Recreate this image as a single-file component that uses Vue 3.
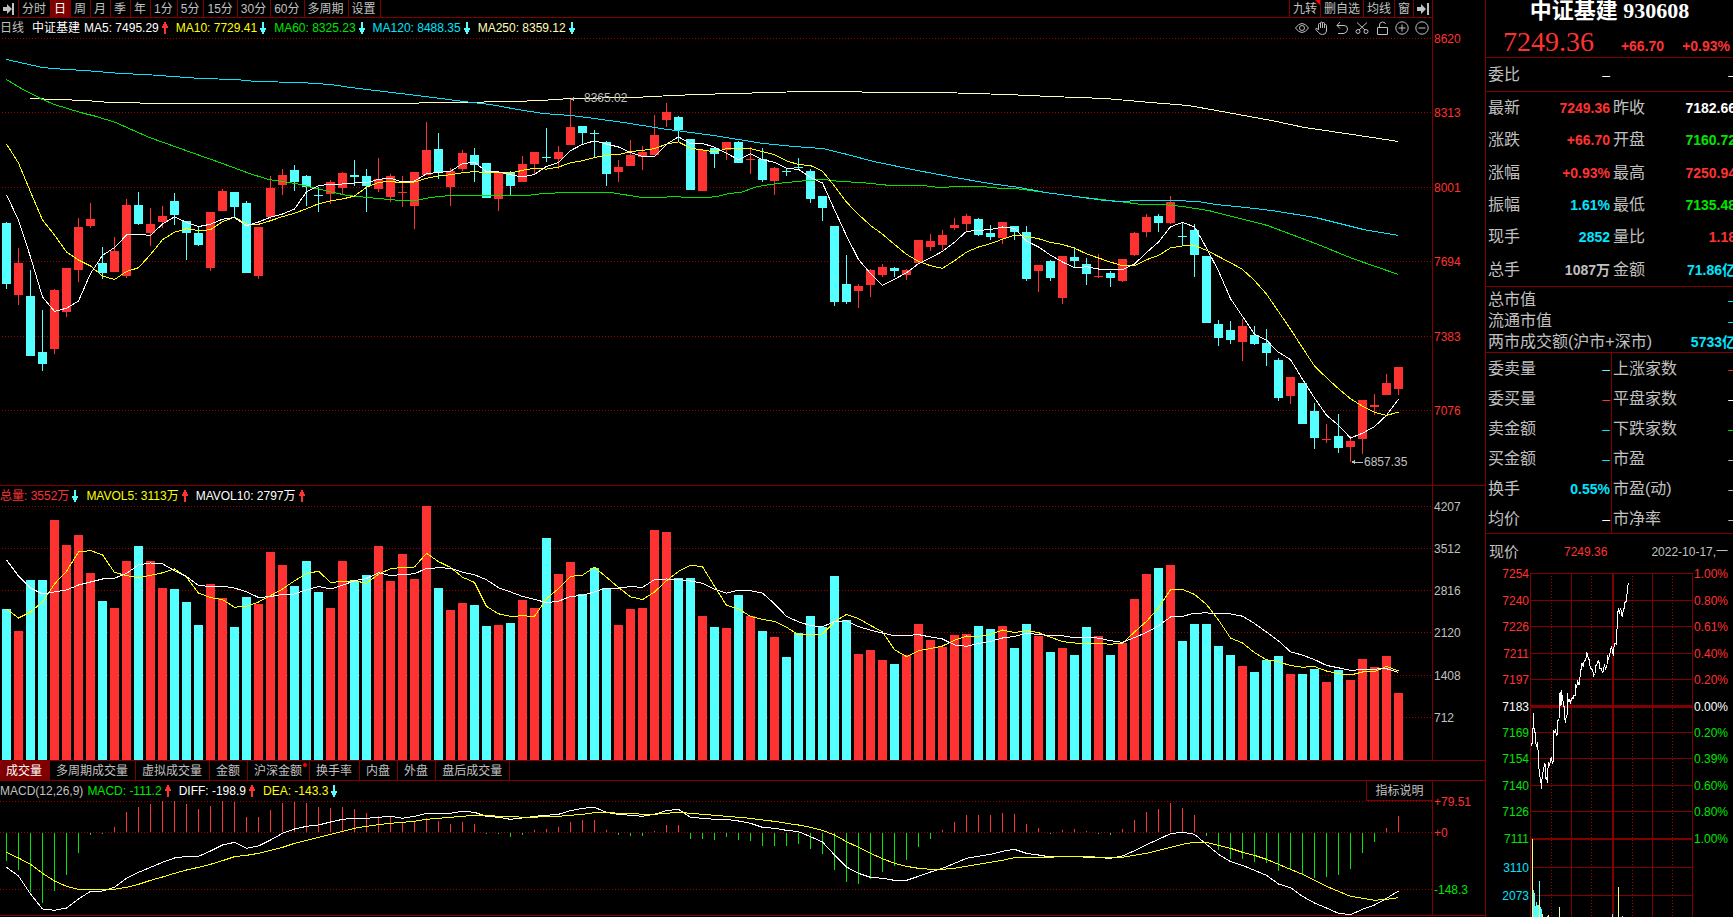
<script setup>
const periods = ['分时', '日', '周', '月', '季', '年', '1分', '5分', '15分', '30分', '60分', '多周期', '设置']
const tools = ['九转', '删自选', '均线', '窗']
const tabs = ['成交量', '多周期成交量', '虚拟成交量', '金额', '沪深金额', '换手率', '内盘', '外盘', '盘后成交量']

const priceLegend = [
  { text: 'MA5: 7495.29', cls: 'white', dir: 'up' },
  { text: 'MA10: 7729.41', cls: 'yellow', dir: 'down' },
  { text: 'MA60: 8325.23', cls: 'green', dir: 'down' },
  { text: 'MA120: 8488.35', cls: 'sky', dir: 'down' },
  { text: 'MA250: 8359.12', cls: 'cream', dir: 'down' }
]
const volumeLegend = [
  { text: '总量: 3552万', cls: 'red', dir: 'down' },
  { text: 'MAVOL5: 3113万', cls: 'yellow', dir: 'up' },
  { text: 'MAVOL10: 2797万', cls: 'white', dir: 'up' }
]
const macdLegend = [
  { text: 'MACD: -111.2', cls: 'green', dir: 'up' },
  { text: 'DIFF: -198.9', cls: 'white', dir: 'up' },
  { text: 'DEA: -143.3', cls: 'yellow', dir: 'down' }
]

// Each candle: direction (1 up, 0 down), high, body top, body bottom, low
const candles = [
  [0, 222, 223, 284, 289], [1, 248, 263, 295, 305], [0, 270, 296, 356, 356], [0, 310, 352, 364, 371], [1, 289, 290, 349, 354],
  [1, 268, 268, 312, 317], [1, 218, 227, 270, 282], [1, 203, 219, 226, 228], [0, 247, 263, 273, 279], [1, 237, 251, 272, 272],
  [1, 199, 205, 276, 278], [0, 192, 205, 224, 225], [1, 208, 224, 233, 246], [1, 206, 216, 222, 228], [0, 193, 201, 215, 225],
  [0, 221, 221, 233, 260], [0, 227, 233, 245, 246], [1, 212, 212, 268, 271], [1, 189, 191, 211, 211], [0, 192, 192, 207, 217],
  [0, 201, 203, 273, 273], [1, 227, 227, 276, 279], [1, 176, 188, 217, 219], [1, 169, 175, 185, 195], [0, 165, 170, 182, 191],
  [0, 175, 176, 187, 206], [0, 187, 195, 196, 212], [1, 180, 182, 194, 204], [1, 172, 173, 188, 194], [0, 160, 175, 177, 186],
  [0, 169, 176, 186, 212], [1, 158, 179, 189, 192], [1, 174, 176, 197, 202], [1, 176, 192, 193, 207], [1, 172, 172, 206, 229],
  [1, 122, 150, 175, 175], [0, 133, 149, 172, 179], [1, 168, 171, 187, 206], [1, 150, 153, 169, 171], [0, 148, 155, 165, 182],
  [0, 163, 163, 198, 198], [1, 172, 172, 199, 211], [0, 171, 172, 186, 195], [1, 156, 164, 182, 182], [1, 152, 152, 164, 174],
  [0, 128, 157, 158, 162], [1, 146, 152, 159, 169], [1, 99, 127, 145, 145], [0, 126, 126, 133, 144], [0, 130, 133, 134, 157],
  [0, 141, 142, 174, 186], [1, 160, 167, 172, 182], [1, 140, 155, 166, 166], [1, 146, 152, 157, 170], [1, 115, 135, 155, 155],
  [1, 103, 112, 120, 127], [0, 116, 117, 130, 141], [0, 139, 139, 190, 190], [1, 149, 150, 191, 191], [0, 147, 148, 154, 168],
  [1, 142, 142, 150, 160], [0, 141, 142, 163, 163], [1, 147, 159, 160, 174], [0, 148, 159, 180, 182], [1, 167, 168, 181, 195],
  [0, 168, 171, 172, 176], [0, 158, 167, 168, 170], [0, 169, 171, 199, 203], [0, 196, 196, 208, 221], [0, 226, 226, 302, 306],
  [0, 255, 284, 302, 304], [1, 284, 286, 291, 308], [1, 269, 270, 285, 297], [1, 264, 267, 275, 277], [0, 267, 268, 271, 277],
  [1, 269, 270, 275, 280], [1, 240, 240, 263, 263], [1, 234, 241, 247, 251], [1, 230, 235, 245, 250], [1, 218, 225, 228, 230],
  [1, 214, 216, 224, 232], [0, 218, 219, 235, 236], [0, 225, 233, 237, 240], [1, 222, 222, 238, 244], [0, 226, 226, 232, 240],
  [0, 226, 232, 279, 281], [1, 265, 265, 271, 292], [0, 260, 261, 278, 281], [1, 256, 256, 298, 304], [0, 247, 257, 261, 267],
  [0, 258, 264, 274, 285], [1, 254, 276, 277, 278], [0, 271, 273, 278, 287], [1, 259, 259, 281, 282], [1, 232, 233, 255, 256],
  [1, 214, 217, 232, 237], [0, 214, 216, 223, 232], [1, 196, 202, 223, 224], [0, 223, 236, 237, 246], [0, 224, 230, 255, 277],
  [0, 256, 256, 323, 323], [0, 320, 324, 338, 346], [0, 321, 330, 340, 344], [1, 319, 326, 342, 361], [0, 326, 335, 344, 345],
  [0, 329, 343, 353, 366], [0, 358, 360, 398, 401], [1, 377, 377, 396, 404], [0, 383, 383, 424, 424], [0, 403, 411, 438, 449],
  [1, 424, 439, 440, 443], [0, 414, 436, 448, 453], [1, 436, 441, 447, 462], [1, 400, 400, 439, 454], [1, 394, 405, 407, 415],
  [1, 374, 383, 395, 395], [1, 367, 367, 389, 395]
]

// Volume bar tops, in thirds of a unit below the pane's origin
const volumes = [
  387, 453, 300, 300, 120, 195, 165, 279, 363, 384, 243, 198, 243, 324, 327, 366, 435, 312, 354, 441,
  351, 372, 216, 255, 318, 243, 336, 384, 243, 303, 285, 198, 303, 222, 297, 78, 324, 390, 369, 375,
  438, 435, 429, 360, 384, 174, 282, 246, 342, 264, 324, 435, 387, 384, 150, 156, 294, 294, 408, 441,
  444, 345, 408, 453, 471, 531, 459, 408, 441, 288, 420, 522, 510, 540, 552, 525, 432, 480, 501, 465,
  462, 438, 447, 438, 504, 432, 468, 516, 504, 525, 441, 468, 525, 489, 357, 282, 264, 255, 483, 432,
  432, 498, 525, 558, 576, 540, 528, 582, 582, 567, 606, 570, 600, 537, 561, 528, 639
].map((v) => 480 + v / 3)

const macdBars = [
  318, 345, 411, 444, 408, 360, 294, 240, 237, 216, 171, 156, 147, 138, 138, 147, 162, 153, 138, 141,
  186, 186, 165, 144, 141, 144, 156, 159, 156, 162, 174, 183, 186, 204, 201, 189, 198, 207, 201, 207,
  237, 237, 246, 240, 225, 222, 216, 201, 195, 195, 225, 240, 243, 243, 228, 210, 210, 252, 252, 255,
  246, 255, 258, 273, 273, 273, 267, 282, 297, 345, 381, 387, 372, 351, 333, 315, 276, 252, 225, 201,
  180, 180, 180, 174, 177, 207, 219, 237, 225, 222, 228, 237, 240, 222, 195, 171, 162, 144, 159, 180,
  243, 285, 312, 312, 321, 324, 348, 345, 357, 369, 366, 360, 342, 294, 261, 219, 183
].map((v) => 755 + v / 3)

const diff = [
  337, 363, 417, 462, 466, 459, 432, 409, 408, 397, 370, 352, 337, 322, 309, 304, 304, 288, 270, 262,
  280, 273, 255, 235, 222, 214, 210, 201, 193, 190, 190, 187, 184, 190, 184, 175, 175, 175, 169, 172,
  184, 187, 193, 189, 184, 181, 178, 167, 160, 157, 172, 178, 181, 184, 178, 167, 163, 187, 190, 193,
  193, 198, 205, 217, 220, 226, 230, 245, 261, 300, 336, 355, 367, 370, 376, 376, 364, 351, 340, 325,
  310, 304, 298, 289, 283, 295, 300, 306, 304, 304, 307, 308, 310, 303, 287, 269, 253, 236, 232, 238,
  268, 298, 320, 331, 346, 361, 387, 398, 424, 444, 459, 475, 479, 463, 450, 430, 408
].map((v) => 755 + v / 3)

const dea = [
  292, 309, 328, 355, 378, 394, 403, 403, 403, 403, 397, 388, 376, 366, 355, 345, 337, 328, 317, 305,
  301, 295, 286, 277, 265, 256, 247, 238, 229, 220, 214, 209, 205, 202, 199, 193, 190, 187, 184, 181,
  181, 184, 184, 187, 187, 184, 184, 181, 178, 173, 172, 175, 175, 178, 178, 175, 172, 175, 178, 181,
  184, 187, 190, 195, 199, 205, 210, 217, 226, 240, 260, 277, 295, 311, 325, 334, 340, 343, 343, 340,
  334, 328, 322, 316, 308, 307, 307, 307, 304, 304, 304, 307, 307, 307, 301, 295, 286, 277, 268, 262,
  262, 271, 280, 292, 301, 313, 328, 343, 358, 376, 394, 409, 424, 430, 436, 433, 428
].map((v) => 755 + v / 3)

const cx = (i) => i * 12 + 6
const toPoints = (ys) => ys.map((y, i) => `${cx(i) + 0.5},${y}`).join(' ')

// Moving average; `head` supplies the values whose window starts before the first bar
function average(values, n, head) {
  return values.map((_, i) => {
    if (i < n - 1) return head[i]
    let sum = 0
    for (let k = i - n + 1; k <= i; k++) sum += values[k]
    return sum / n
  })
}

const closes = candles.map((c) => (c[0] ? c[2] : c[3]))
const ma5 = toPoints(average(closes, 5, [195, 220, 257, 297]))
const ma10 = toPoints(average(closes, 10, [144, 163, 192, 220, 235, 252, 260, 266, 276]))
const vol5 = toPoints(average(volumes, 5, [609, 618, 612, 602]))
const vol10 = toPoints(average(volumes, 10, [560, 576, 588, 594, 592, 590, 585, 582, 579]))
const diffLine = toPoints(diff)
const deaLine = toPoints(dea)

// Moves whole-number points to pixel centres so that thin lines stay even
const centred = (s) => s.split(' ').map((p) => p.split(',').map((n) => Number(n) + 0.5).join(',')).join(' ')
const ma60 = centred('6,79 19,87 42,99 54,104 80,112 96,116 115,122 149,137 191,152 222,163 249,173 268,179 295,183 333,192 347,195 367,197 400,200 415,200 430,197 450,195 527,195 543,193 567,192 610,192 642,197 660,197 673,196 687,197 707,197 717,196 728,193 740,192 757,186 777,183 807,180 823,179 840,181 860,182 890,185 923,185 938,187 960,186 982,186 1001,188 1015,188 1045,192 1075,196 1119,201 1141,204 1163,204 1182,206 1208,210 1267,225 1315,243 1352,258 1398,274')
const ma120 = centred('6,59 24,63 42,67 65,69 85,70 120,73 145,74 200,78 235,79 255,81 300,82 330,84 350,87 400,93 433,97 463,101 490,104 517,109 543,113 570,115 594,118 623,122 667,129 683,131 713,135 738,139 763,143 793,146 822,148 847,154 873,161 917,170 949,176 989,183 1019,187 1045,192 1075,196 1104,200 1119,201 1141,200 1174,200 1197,201 1215,204 1245,207 1271,210 1315,217 1363,229 1398,235')
const ma250 = centred('30,98 57,99 85,100 109,102 169,103 383,103 455,102 513,101 540,100 570,98 633,97 672,95 697,94 733,93 770,92 803,91 843,91 880,92 940,92 1006,94 1050,96 1105,98 1150,102 1188,105 1216,110 1271,120 1304,127 1352,134 1398,141')

const priceAxis = [[38, '8620'], [112, '8313'], [187, '8001'], [261, '7694'], [336, '7383'], [410, '7076']]
const volumeAxis = [[506, '4207'], [548, '3512'], [590, '2816'], [632, '2120'], [675, '1408'], [717, '712']]
const macdAxis = [[801, '+79.51', 'red'], [832, '+0', 'red'], [889, '-148.3', 'green']]

const quotes = [
  ['最新', '7249.36', 'red', '昨收', '7182.66', 'white'],
  ['涨跌', '+66.70', 'red', '开盘', '7160.72', 'green'],
  ['涨幅', '+0.93%', 'red', '最高', '7250.94', 'red'],
  ['振幅', '1.61%', 'sky', '最低', '7135.48', 'green'],
  ['现手', '2852', 'sky', '量比', '1.18', 'red'],
  ['总手', '1087万', 'grey', '金额', '71.86亿', 'sky']
]
const totals = [
  ['总市值', '–', 'sky dash'],
  ['流通市值', '–', 'sky dash'],
  ['两市成交额(沪市+深市)', '5733亿', 'sky']
]
const stats = [
  ['委卖量', '–', 'cyan dash', '上涨家数', '–', 'red dash'],
  ['委买量', '–', 'red dash', '平盘家数', '–', 'white dash'],
  ['卖金额', '–', 'sky dash', '下跌家数', '–', 'green dash'],
  ['买金额', '–', 'sky dash', '市盈', '–', 'grey dash'],
  ['换手', '0.55%', 'sky', '市盈(动)', '–', 'grey dash'],
  ['均价', '–', 'white dash', '市净率', '–', 'grey dash']
]

const miniRows = [
  [573, '7254', '1.00%', 'red'], [600, '7240', '0.80%', 'red'], [626, '7226', '0.61%', 'red'], [653, '7211', '0.40%', 'red'],
  [679, '7197', '0.20%', 'red'], [706, '7183', '0.00%', 'white'], [732, '7169', '0.20%', 'green'], [758, '7154', '0.39%', 'green'],
  [785, '7140', '0.60%', 'green'], [811, '7126', '0.80%', 'green'], [838, '7111', '1.00%', 'green'], [867, '3110', '', 'sky'], [895, '2073', '', 'sky']
]
const miniSolid = [44, 85, 166, 206]
const miniDotted = [65, 105, 146, 186]
const miniLine = [
  304, 648, 305, 641, 307, 641, 307, 594, 310, 594, 310, 549, 312, 594, 314, 608, 317, 609, 317, 637, 320, 648, 323, 637, 326, 705,
  329, 740, 332, 742, 334, 776, 337, 735, 341, 715, 345, 700, 347, 745, 350, 743, 352, 758, 355, 695, 358, 705, 361, 695, 364, 680,
  367, 699, 370, 695, 371, 600, 373, 610, 376, 598, 379, 616, 382, 612, 383, 570, 387, 570, 388, 499, 391, 485, 393, 528, 395, 481,
  396, 495, 399, 512, 400, 530, 403, 530, 404, 560, 406, 580, 409, 555, 411, 560, 412, 489, 415, 515, 418, 509, 421, 518, 426, 503,
  430, 506, 432, 495, 436, 497, 436, 463, 440, 472, 443, 455, 447, 465, 452, 425, 456, 400, 460, 412, 463, 390, 467, 390, 470, 370,
  473, 373, 475, 389, 478, 389, 479, 405, 484, 418, 488, 420, 491, 437, 495, 432, 496, 405, 500, 405, 505, 392, 508, 400, 508, 415,
  514, 415, 518, 430, 523, 405, 527, 417, 531, 405, 532, 375, 535, 389, 540, 368, 545, 347, 547, 368, 550, 374, 553, 340, 559, 342,
  560, 298, 563, 296, 563, 255, 565, 234, 568, 252, 571, 234, 574, 244, 577, 262, 580, 237, 583, 235, 585, 217, 589, 214, 592, 180, 595, 160
].map((v, i) => (i % 2 ? 530 + v / 3 : v / 3 - 56)).join(' ')
const miniVolumes = [
  [310, 1080, 'cyan'], [313, 1088, 'cyan'], [316, 1128, 'cyan'], [319, 1116, 'cyan'], [322, 1125, 'cyan'], [325, 1125, 'cyan'],
  [328, 1053, 'cyan'], [331, 1131, 'cyan'], [334, 1137, 'cyan'], [352, 1158, 'cyan'], [547, 1152, 'cyan'], [577, 1158, 'cyan'],
  [307, 927, 'straw'], [337, 1152, 'straw'], [355, 1155, 'straw'], [388, 1131, 'straw'], [565, 1071, 'straw'], [328, 1110, 'straw']
].map(([x, y, cls]) => [Math.floor(x / 3) - 56, 530 + y / 3, cls])
</script>

<template>
  <div class="terminal">
    <main class="charts">
      <nav class="toolbar">
        <button class="tool jump" aria-label="展开">
          <svg width="11" height="12" viewBox="0 0 11 12"><path d="M0 4h4V1l5 5-5 5V8H0z M9 0h2v12h-2z" /></svg>
        </button>
        <button v-for="p in periods" :key="p" class="tool" :class="{ active: p === '日' }">{{ p }}</button>
        <span class="spacer"></span>
        <button v-for="(t, i) in tools" :key="t" class="tool right" :class="{ flagged: i === 0 }">{{ t }}</button>
        <button class="tool right jump" aria-label="收起">
          <svg width="12" height="12" viewBox="0 0 12 12"><path d="M0 4h4V1l5 5-5 5V8H0z M10 0h2v12h-2z" /></svg>
        </button>
      </nav>

      <section class="pane">
        <header class="legend">
          <span class="grey first">日线</span>
          <span class="white name">中证基建</span>
          <span v-for="l in priceLegend" :key="l.text" class="entry" :class="l.cls">{{ l.text }}
            <svg class="mark" :class="l.dir" width="6" height="12" viewBox="0 0 6 12"><path d="M2 0h2v2h1v2h1v2H4v6H2V6H0V4h1V2h1z" /></svg>
          </span>
          <span class="icons">
            <button aria-label="显示"><svg viewBox="0 0 14 14"><path d="M0.500 7Q3.500 2.500 7 2.500T13.500 7Q10.500 11.500 7 11.500T0.500 7z" /><circle cx="7" cy="7" r="2.500" /></svg></button>
            <button aria-label="拖动"><svg viewBox="0 0 14 14"><path d="M3.500 9V3.500Q3.500 2.500 4.500 2.500T5.500 3.500V7V2Q5.500 1 6.500 1T7.500 2V7V2.500Q7.500 1.500 8.500 1.500T9.500 2.500V7V4.500Q9.500 3.500 10.500 3.500T11.500 4.500V10Q11 13.500 7.500 13.500Q5 13.500 3.500 11.500L0.800 8.500Q0.500 7 2 7.300L3.500 9" /></svg></button>
            <button aria-label="撤销"><svg viewBox="0 0 14 14"><path d="M5 1L2 4.500L5 7.500M2 4.500H9Q12.500 4.500 12.500 8T9 12.500H3" /></svg></button>
            <button aria-label="剪切"><svg viewBox="0 0 14 14"><path d="M2 1.500L10 9M12 1.500L4 9" /><circle cx="3" cy="10.500" r="2" /><circle cx="11" cy="10.500" r="2" /></svg></button>
            <button aria-label="锁定"><svg viewBox="0 0 14 14"><path d="M2.500 6.500H12.500V13.500H2.500zM4.500 6.500V4Q4.500 1 7.500 1Q10 1 10.500 3" /></svg></button>
            <button aria-label="放大"><svg viewBox="0 0 14 14"><circle cx="7" cy="7" r="6.200" /><path d="M3.500 7H10.500M7 3.500V10.500" /></svg></button>
            <button aria-label="缩小"><svg viewBox="0 0 14 14"><circle cx="7" cy="7" r="6.200" /><path d="M3.500 7H10.500" /></svg></button>
          </span>
        </header>
        <div class="plot">
          <svg viewBox="0 38 1432 447" preserveAspectRatio="none" shape-rendering="crispEdges">
            <path v-for="a in priceAxis" :key="a[1]" class="dots" :d="`M2 ${a[0] + 0.5}H1432`" />
            <g v-for="(c, i) in candles" :key="i" :class="c[0] ? 'red' : 'cyan'">
              <rect :x="cx(i)" :y="c[1]" width="1" :height="c[4] - c[1]" />
              <rect :x="cx(i) - 4" :y="c[2]" width="9" :height="c[3] - c[2]" />
            </g>
            <polyline class="line cream" :points="ma250" />
            <polyline class="line green" :points="ma60" />
            <polyline class="line sky" :points="ma120" />
            <polyline class="line yellow" :points="ma10" />
            <polyline class="line white" :points="ma5" />
            <path class="grey" d="M570 99l4 -2v4z M1351 462l4 -2v4z M1354 462h9v1h-9z" />
            <text class="grey" x="584" y="102">8365.02</text>
            <text class="grey" x="1364" y="466">6857.35</text>
          </svg>
        </div>
        <div class="axis">
          <svg viewBox="0 38 52 447" preserveAspectRatio="none">
            <text v-for="a in priceAxis" :key="a[1]" class="red" x="1" :y="a[0] + 5">{{ a[1] }}</text>
          </svg>
        </div>
      </section>

      <section class="pane">
        <header class="legend">
          <span v-for="l in volumeLegend" :key="l.text" class="entry" :class="l.cls">{{ l.text }}
            <svg class="mark" :class="l.dir" width="6" height="12" viewBox="0 0 6 12"><path d="M2 0h2v2h1v2h1v2H4v6H2V6H0V4h1V2h1z" /></svg>
          </span>
        </header>
        <div class="plot">
          <svg viewBox="0 506 1432 254" preserveAspectRatio="none" shape-rendering="crispEdges">
            <path v-for="a in volumeAxis" :key="a[1]" class="dots" :d="`M2 ${a[0] + 0.5}H1432`" />
            <rect v-for="(y, i) in volumes" :key="i" :class="candles[i][0] ? 'red' : 'cyan'" :x="cx(i) - 4" :y="y" width="9" :height="760 - y" />
            <polyline class="line yellow" :points="vol5" />
            <polyline class="line white" :points="vol10" />
          </svg>
        </div>
        <div class="axis">
          <svg viewBox="0 506 52 254" preserveAspectRatio="none">
            <text v-for="a in volumeAxis" :key="a[1]" class="grey" x="1" :y="a[0] + 5">{{ a[1] }}</text>
          </svg>
        </div>
      </section>

      <nav class="tabs">
        <button v-for="t in tabs" :key="t" class="tab" :class="{ active: t === '成交量', hot: t === '沪深金额' }">{{ t }}</button>
      </nav>

      <section class="pane last">
        <header class="legend">
          <span class="grey title">MACD(12,26,9)</span>
          <span v-for="l in macdLegend" :key="l.text" class="entry" :class="l.cls">{{ l.text }}
            <svg class="mark" :class="l.dir" width="6" height="12" viewBox="0 0 6 12"><path d="M2 0h2v2h1v2h1v2H4v6H2V6H0V4h1V2h1z" /></svg>
          </span>
          <button class="explain">指标说明</button>
        </header>
        <div class="plot">
          <svg viewBox="0 801 1432 114" preserveAspectRatio="none" shape-rendering="crispEdges">
            <path v-for="a in macdAxis" :key="a[1]" class="dots" :d="`M0 ${a[0] + 0.5}H1432`" />
            <rect v-for="(y, i) in macdBars" :key="i" :class="y < 832 ? 'red' : 'bargreen'" :x="cx(i)" :y="Math.min(y, 833)" width="1" :height="y < 832 ? 832 - y : y - 833" />
            <polyline class="line white" :points="diffLine" />
            <polyline class="line yellow" :points="deaLine" />
          </svg>
        </div>
        <div class="axis">
          <svg viewBox="0 801 52 114" preserveAspectRatio="none">
            <text v-for="a in macdAxis" :key="a[1]" :class="a[2]" x="1" :y="a[0] + 5">{{ a[1] }}</text>
          </svg>
        </div>
      </section>
    </main>

    <aside class="side">
      <header class="head">
        <h1>中证基建 930608</h1>
        <div class="last-price red">
          <strong class="big">7249.36</strong>
          <b class="change">+66.70</b>
          <b>+0.93%</b>
        </div>
      </header>
      <dl class="ratio">
        <div class="pair"><dt>委比</dt><dd class="white dash">–</dd></div>
        <div class="pair"><dt></dt><dd class="white dash">–</dd></div>
      </dl>
      <dl class="quotes">
        <template v-for="q in quotes" :key="q[0]">
          <div class="pair"><dt>{{ q[0] }}</dt><dd :class="q[2]">{{ q[1] }}</dd></div>
          <div class="pair"><dt>{{ q[3] }}</dt><dd :class="q[5]">{{ q[4] }}</dd></div>
        </template>
      </dl>
      <dl class="totals">
        <div v-for="t in totals" :key="t[0]" class="pair"><dt>{{ t[0] }}</dt><dd :class="t[2]">{{ t[1] }}</dd></div>
      </dl>
      <dl class="quotes stats">
        <template v-for="q in stats" :key="q[0]">
          <div class="pair"><dt>{{ q[0] }}</dt><dd :class="q[2]">{{ q[1] }}</dd></div>
          <div class="pair"><dt>{{ q[3] }}</dt><dd :class="q[5]">{{ q[4] }}</dd></div>
        </template>
      </dl>
      <div class="now">
        <span class="now-label">现价</span>
        <span class="now-price red">7249.36</span>
        <span class="now-date">2022-10-17,一</span>
      </div>
      <svg class="mini" viewBox="0 566 247 351" preserveAspectRatio="xMinYMin slice">
        <g shape-rendering="crispEdges">
          <path v-for="r in miniRows" :key="r[0]" class="grid" :d="`M44 ${r[0] + 0.5}H207`" />
          <rect class="maroon" x="44" y="705" width="163" height="3" />
          <rect class="maroon" x="44" y="838" width="163" height="2" />
          <path v-for="x in miniSolid" :key="x" class="grid" :d="`M${x + 0.5} 573V917`" />
          <rect class="maroon" x="126" y="573" width="2" height="344" />
          <path v-for="x in miniDotted" :key="x" class="dots" :d="`M${x + 0.5} 576V917`" />
          <rect v-for="(v, i) in miniVolumes" :key="i" :class="v[2]" :x="v[0]" :y="v[1]" width="1" :height="917 - v[1]" />
          <polyline class="line white" :points="miniLine" />
        </g>
        <g v-for="r in miniRows" :key="r[0]" :class="r[3]">
          <text x="43" :y="r[0] + 5" text-anchor="end">{{ r[1] }}</text>
          <text x="208" :y="r[0] + 5">{{ r[2] }}</text>
        </g>
      </svg>
    </aside>
  </div>
</template>

<style>
body {
  background: #000;
  overflow: hidden;
}
</style>

<style scoped>
* {
  box-sizing: border-box;
}
.terminal {
  display: grid;
  grid-template-columns: minmax(0, 1fr) 248px;
  height: 100vh;
  background: #000;
  color: #c0c0c0;
  font: 12px/16px "Liberation Sans", "Noto Sans CJK SC", sans-serif;
  white-space: nowrap;
  overflow: hidden;
}
.charts {
  display: grid;
  grid-template-rows: 18px minmax(0, 468fr) minmax(0, 275fr) 20px minmax(0, 136fr);
  min-width: 0;
}
button {
  margin: 0;
  padding: 0;
  border: 0;
  background: none;
  color: inherit;
  font: inherit;
}
.red { color: #ff3232; fill: #ff3232; }
.cyan { color: #54ffff; fill: #54ffff; }
.sky { color: #00e6ff; fill: #00e6ff; }
.green { color: #00e600; fill: #00e600; }
.bargreen { fill: #00e600; }
.yellow { color: #ffff00; fill: #ffff00; }
.cream { color: #ffffb9; fill: #ffffb9; }
.straw { fill: #ffff80; }
.white { color: #fff; fill: #fff; }
.grey { color: #c0c0c0; fill: #c0c0c0; }

.toolbar {
  display: flex;
  margin-right: 52px;
  border-right: 1px solid #800000;
  border-bottom: 1px solid #800000;
}
.tool {
  height: 17px;
  padding: 0 4px 0 3px;
  border-right: 1px solid #800000;
  line-height: 16px;
}
.tool.active {
  background: #800000;
  color: #fff;
}
.tool.right {
  position: relative;
  padding: 0 3px;
  border-right: 0;
  border-left: 1px solid #800000;
}
.tool.flagged::after {
  content: "";
  position: absolute;
  top: 0;
  right: 0;
  border-top: 5px solid #ff0000;
  border-left: 5px solid transparent;
}
.jump svg {
  display: block;
  fill: #c0c0c0;
}
.spacer {
  flex: 1;
}

.pane {
  display: grid;
  grid-template: 20px minmax(0, 1fr) / minmax(0, 1fr) 52px;
  border-bottom: 1px solid #800000;
  min-height: 0;
}
.pane.last {
  margin-bottom: 1px;
}
.legend {
  display: flex;
  align-items: center;
  border-right: 1px solid #800000;
}
.first {
  margin-right: 8px;
}
.name {
  margin-right: 4px;
}
.title {
  margin-right: 4px;
}
.entry {
  display: flex;
  align-items: center;
  gap: 3px;
  margin-right: 8px;
}
.mark.up {
  fill: #ff3232;
}
.mark.down {
  fill: #54ffff;
  transform: rotate(180deg);
}
.icons {
  display: flex;
  gap: 6px;
  margin-left: auto;
  padding-right: 3px;
}
.icons svg {
  display: block;
  width: 14px;
  height: 14px;
  fill: none;
  stroke: #c0c0c0;
}
.explain {
  align-self: stretch;
  width: 66px;
  margin-left: auto;
  border-left: 1px solid #800000;
  border-bottom: 1px solid #800000;
}
.plot {
  grid-row: 2;
  border-right: 1px solid #800000;
  min-height: 0;
}
.axis {
  grid-area: 2 / 2;
  min-height: 0;
}
.plot svg,
.axis svg {
  display: block;
  width: 100%;
  height: 100%;
  overflow: visible;
}
.line {
  fill: none;
  stroke: currentColor;
}
.dots {
  fill: none;
  stroke: #a00000;
  stroke-dasharray: 1 2;
}

.tabs {
  display: flex;
  border-bottom: 1px solid #800000;
}
.tab {
  position: relative;
  padding: 1px 7px 0 6px;
  border-right: 1px solid #800000;
}
.tab.active {
  background: #800000;
  color: #fff;
}
.tab.hot::after {
  content: "";
  position: absolute;
  top: 2px;
  right: 2px;
  width: 4px;
  height: 4px;
  border-radius: 2px;
  background: #ff0000;
}

.side {
  display: flex;
  flex-direction: column;
  border-left: 1px solid #800000;
  overflow: hidden;
}
.head {
  height: 58px;
  border-bottom: 1px solid #800000;
}
h1 {
  margin: 0;
  color: #fff;
  text-align: center;
  font: bold 22px/22px "Liberation Serif", "Noto Sans CJK SC", serif;
}
.last-price {
  display: flex;
  align-items: baseline;
  padding: 0 3px 0 17px;
  font-size: 14px;
}
.big {
  font: 28px/40px "Liberation Serif", serif;
}
.change {
  margin: 0 18px 0 auto;
}
dl {
  display: grid;
  grid-template-columns: 125px 125px;
  margin: 0 -3px 0 0;
  border-bottom: 1px solid #800000;
  font-size: 14px;
}
dt {
  font-size: 16px;
}
dd {
  margin: 0;
  font-weight: bold;
}
dd.dash {
  font-weight: normal;
}
.pair {
  display: flex;
  align-items: center;
  justify-content: space-between;
  padding: 0 1px 0 2px;
}
.pair:nth-child(2n) {
  padding: 0 0 0 2px;
}
.ratio {
  height: 34px;
}
.quotes {
  height: 195px;
  grid-template-rows: repeat(6, 1fr);
}
.totals {
  height: 66px;
  padding-top: 2px;
  grid-template-columns: 1fr;
}
.totals .pair {
  padding: 0 0 0 2px;
}
.stats {
  height: 181px;
}
.stats .pair {
  padding-top: 2px;
}
.stats .pair:nth-child(2n) {
  border-left: 1px solid #800000;
  padding: 2px 0 0 1px;
}
.now {
  display: flex;
  align-items: center;
  height: 32px;
  padding: 4px 0 0 3px;
}
.now-label {
  font-size: 15px;
}
.now-price {
  margin: 0 44px 0 45px;
}
.mini {
  display: block;
  flex: 1;
  width: 100%;
  min-height: 0;
  font-size: 12px;
}
.grid {
  fill: none;
  stroke: #800000;
}
.maroon {
  fill: #800000;
}
</style>
